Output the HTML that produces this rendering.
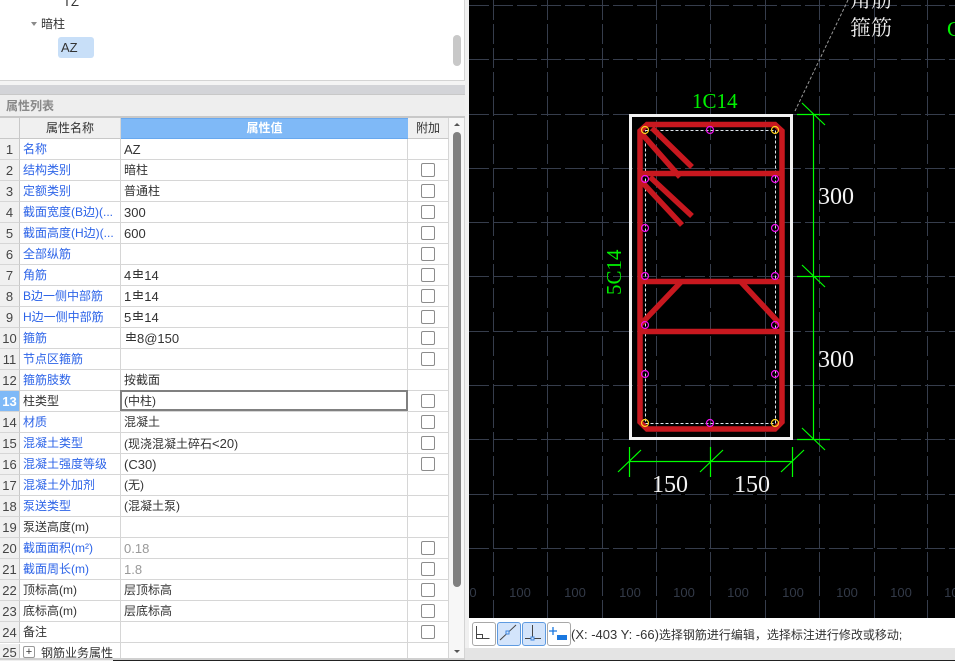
<!DOCTYPE html>
<html lang="zh"><head><meta charset="utf-8"><title>属性列表</title>
<style>
html,body{margin:0;padding:0}
body{width:955px;height:661px;position:relative;overflow:hidden;background:#efefef;font:12px/17px "Liberation Sans","Noto Sans CJK SC",sans-serif;color:#333}
.a{position:absolute}
s{text-decoration:none;font-size:13px}
table{position:absolute;left:0;top:118px;width:449px;border-collapse:separate;border-spacing:0;table-layout:fixed;background:#fff}
td{height:19px;padding:1px 0 0 3px;border-bottom:1px solid #d6d6d6;border-right:1px solid #d6d6d6;white-space:nowrap;overflow:hidden;box-sizing:content-box;line-height:17px;vertical-align:middle}
td.n{background:#f0f0f0;padding:1px 0 0 0;text-align:center;font-size:13px;color:#444;border-right:1px solid #c8c8c8}
td.b{color:#2d64e8}
td.c{padding:0;position:relative}
td.c i{position:absolute;left:13px;top:3px;width:12px;height:12px;border:1px solid #8c8c8c;border-radius:2px;background:#fff}
tr.h td{height:20px;background:#f0f0f0;text-align:center;padding:0;font-size:12px;border-bottom:1px solid #c8c8c8}
tr.h td.v{background:#7fb9f7;color:#fff;border:1px solid #68a8ee;border-width:1px 0 1px 0;height:19px;font-weight:bold}
svg.s{display:inline-block;width:10px;height:10px;vertical-align:1px;margin:0 1px 0 2px}
.bt{position:absolute;top:622px;width:22px;height:22px;border:1px solid #a8a8a8;border-radius:3px;background:#fff}
.bt.on{background:#d3e4fb;border-color:#5e9ae0}
</style></head><body>

<div class="a" style="left:0;top:0;width:465px;height:81px;background:#fff;border-bottom:1px solid #d4d4d4;box-sizing:border-box"></div>
<div class="a" style="left:63px;top:-7px"><s>TZ</s></div>
<div class="a" style="left:31px;top:22px;width:0;height:0;border:3.5px solid transparent;border-top:4px solid #8a8a8a;border-bottom:0"></div>
<div class="a" style="left:41px;top:16px">暗柱</div>
<div class="a" style="left:58px;top:37px;width:36px;height:21px;background:#c8dff8;border-radius:3px"></div>
<div class="a" style="left:61px;top:39px"><s>AZ</s></div>
<div class="a" style="left:453px;top:35px;width:8px;height:31px;background:#c8c8c8;border-radius:4px"></div>
<div class="a" style="left:464px;top:0;width:1px;height:81px;background:#d4d4d4"></div>

<div class="a" style="left:0;top:81px;width:465px;height:4px;background:#f4f4f4"></div>
<div class="a" style="left:0;top:85px;width:465px;height:9px;background:#d3d4d8"></div>
<div class="a" style="left:0;top:94px;width:465px;height:22px;background:#eeeeee;border-top:1px solid #c8c8c8;box-sizing:border-box"></div>
<div class="a" style="left:6px;top:98px;color:#888;font-weight:bold">属性列表</div>
<div class="a" style="left:0;top:116px;width:465px;height:2px;background:#c8c8c8"></div>

<table>
<colgroup><col style="width:20px"><col style="width:101px"><col style="width:287px"><col style="width:41px"></colgroup>
<tr class="h"><td class="n" style="font-size:12px"></td><td>属性名称</td><td class="v">属性值</td><td>附加</td></tr>
<tr><td class="n">1</td><td class="b">名称</td><td><s>AZ</s></td><td class="c"></td></tr>
<tr><td class="n">2</td><td class="b">结构类别</td><td>暗柱</td><td class="c"><i></i></td></tr>
<tr><td class="n">3</td><td class="b">定额类别</td><td>普通柱</td><td class="c"><i></i></td></tr>
<tr><td class="n">4</td><td class="b">截面宽度(B边)(...</td><td><s>300</s></td><td class="c"><i></i></td></tr>
<tr><td class="n">5</td><td class="b">截面高度(H边)(...</td><td><s>600</s></td><td class="c"><i></i></td></tr>
<tr><td class="n">6</td><td class="b">全部纵筋</td><td></td><td class="c"><i></i></td></tr>
<tr><td class="n">7</td><td class="b">角筋</td><td><s>4</s><svg class="s" viewBox="0 0 10 10"><path d="M5 0V8M1 2.500H9V5.500H1ZM0 8.500H10" fill="none" stroke="#333"/></svg><s>14</s></td><td class="c"><i></i></td></tr>
<tr><td class="n">8</td><td class="b">B边一侧中部筋</td><td><s>1</s><svg class="s" viewBox="0 0 10 10"><path d="M5 0V8M1 2.500H9V5.500H1ZM0 8.500H10" fill="none" stroke="#333"/></svg><s>14</s></td><td class="c"><i></i></td></tr>
<tr><td class="n">9</td><td class="b">H边一侧中部筋</td><td><s>5</s><svg class="s" viewBox="0 0 10 10"><path d="M5 0V8M1 2.500H9V5.500H1ZM0 8.500H10" fill="none" stroke="#333"/></svg><s>14</s></td><td class="c"><i></i></td></tr>
<tr><td class="n">10</td><td class="b">箍筋</td><td><svg class="s" viewBox="0 0 10 10"><path d="M5 0V8M1 2.500H9V5.500H1ZM0 8.500H10" fill="none" stroke="#333"/></svg><s>8@150</s></td><td class="c"><i></i></td></tr>
<tr><td class="n">11</td><td class="b">节点区箍筋</td><td></td><td class="c"><i></i></td></tr>
<tr><td class="n">12</td><td class="b">箍筋肢数</td><td>按截面</td><td class="c"></td></tr>
<tr><td class="n" style="background:#7fb9f7;color:#fff;font-weight:bold">13</td><td>柱类型</td><td>(中柱)</td><td class="c"><i></i></td></tr>
<tr><td class="n">14</td><td class="b">材质</td><td>混凝土</td><td class="c"><i></i></td></tr>
<tr><td class="n">15</td><td class="b">混凝土类型</td><td>(现浇混凝土碎石<s>&lt;20</s>)</td><td class="c"><i></i></td></tr>
<tr><td class="n">16</td><td class="b">混凝土强度等级</td><td><s>(C30)</s></td><td class="c"><i></i></td></tr>
<tr><td class="n">17</td><td class="b">混凝土外加剂</td><td>(无)</td><td class="c"></td></tr>
<tr><td class="n">18</td><td class="b">泵送类型</td><td>(混凝土泵)</td><td class="c"></td></tr>
<tr><td class="n">19</td><td>泵送高度(m)</td><td></td><td class="c"></td></tr>
<tr><td class="n">20</td><td class="b">截面面积(m²)</td><td style="color:#999"><s>0.18</s></td><td class="c"><i></i></td></tr>
<tr><td class="n">21</td><td class="b">截面周长(m)</td><td style="color:#999"><s>1.8</s></td><td class="c"><i></i></td></tr>
<tr><td class="n">22</td><td>顶标高(m)</td><td>层顶标高</td><td class="c"><i></i></td></tr>
<tr><td class="n">23</td><td>底标高(m)</td><td>层底标高</td><td class="c"><i></i></td></tr>
<tr><td class="n">24</td><td>备注</td><td></td><td class="c"><i></i></td></tr>
</table>

<div class="a" style="left:0;top:643px;width:449px;height:15px;background:#fff;overflow:hidden">
  <div class="a" style="left:0;top:1px;width:19px;height:15px;background:#f0f0f0;border-right:1px solid #c8c8c8;text-align:center;font-size:13px;color:#444">25</div>
  <div class="a" style="left:23px;top:3px;width:10px;height:10px;border:1px solid #999;border-radius:2px;text-align:center;line-height:10px;font-size:11px">+</div>
  <div class="a" style="left:41px;top:2px">钢筋业务属性</div>
  <div class="a" style="left:120px;top:0;width:1px;height:15px;background:#d6d6d6"></div>
  <div class="a" style="left:407px;top:0;width:1px;height:15px;background:#d6d6d6"></div>
  <div class="a" style="left:448px;top:0;width:1px;height:15px;background:#d6d6d6"></div>
</div>

<div class="a" style="left:120px;top:390px;width:288px;height:21px;border:2px solid #808080;box-sizing:border-box"></div>

<div class="a" style="left:449px;top:118px;width:15px;height:540px;background:#f7f7f7"></div>
<div class="a" style="left:453px;top:132px;width:8px;height:455px;background:#808080;border-radius:4px"></div>
<div class="a" style="left:454px;top:123px;width:0;height:0;border:3px solid transparent;border-bottom:3px solid #555;border-top:0"></div>
<div class="a" style="left:454px;top:650px;width:0;height:0;border:3px solid transparent;border-top:3px solid #555;border-bottom:0"></div>
<div class="a" style="left:464px;top:118px;width:1px;height:540px;background:#d4d4d4"></div>
<div class="a" style="left:0;top:658px;width:465px;height:2px;background:#d0d0d0"></div>
<div class="a" style="left:113px;top:660px;width:842px;height:1px;background:#222"></div>

<svg class="a" style="left:0;top:0" width="955" height="618" viewBox="0 0 955 618" font-family="'Liberation Serif','Noto Serif CJK SC',serif">
<rect x="469" y="0" width="486" height="618" fill="#000"/>
<g stroke="#363d4c" stroke-width="1" stroke-dasharray="20 4" fill="none">
<path d="M493.500 0V618M547.500 0V618M602.500 0V618M656.500 0V618M710.500 0V618M765.500 0V618M819.500 0V618M874.500 0V618M927.500 0V618"/>
<path d="M469 5.500H955M469 59.500H955M469 114.500H955M469 168.500H955M469 222.500H955M469 276.500H955M469 331.500H955M469 385.500H955M469 439.500H955M469 494.500H955M469 548.500H955"/>
</g>
<g fill="#333a48" font-family="'Liberation Sans',sans-serif" font-size="13" text-anchor="middle">
<text x="473" y="597">0</text><text x="520" y="597">100</text><text x="575" y="597">100</text><text x="630" y="597">100</text><text x="684" y="597">100</text><text x="738" y="597">100</text><text x="793" y="597">100</text><text x="847" y="597">100</text><text x="901" y="597">100</text><text x="955" y="597">100</text>
</g>
<path d="M795 111L848 0" stroke="#999" stroke-dasharray="3 2" fill="none"/>
<rect x="630.500" y="115.500" width="161" height="323" fill="none" stroke="#f2f2f2" stroke-width="3"/>
<rect x="645.500" y="130.500" width="130" height="293" fill="none" stroke="#dfe6ee" stroke-dasharray="3 2"/>
<g stroke="#c8181f" stroke-width="5.500" fill="none">
<path d="M647 124.500H775L782 131V422L775 429H647L640 422V131Z"/>
<path d="M640 173.500H782M640 281.500H782M640 331.500H782"/>
<path d="M642 134L680 177M652 128L692 167M642 182L682 225M650 177L692 216"/>
<path d="M640 325L681 282M781 325L741 282"/>
</g>
<g fill="none" stroke="#f010f0" stroke-width="1.200">
<circle cx="710" cy="130" r="3.500"/><circle cx="645" cy="179" r="3.500"/><circle cx="775" cy="179" r="3.500"/><circle cx="645" cy="228" r="3.500"/><circle cx="775" cy="228" r="3.500"/><circle cx="645" cy="276" r="3.500"/><circle cx="775" cy="276" r="3.500"/><circle cx="645" cy="325" r="3.500"/><circle cx="775" cy="325" r="3.500"/><circle cx="645" cy="374" r="3.500"/><circle cx="775" cy="374" r="3.500"/><circle cx="710" cy="423" r="3.500"/>
</g>
<g fill="none" stroke="#ffd020" stroke-width="1.200">
<circle cx="645" cy="130" r="3.500"/><circle cx="775" cy="130" r="3.500"/><circle cx="645" cy="423" r="3.500"/><circle cx="775" cy="423" r="3.500"/>
</g>
<g stroke="#00ff00" stroke-width="1.200" fill="none">
<path d="M813.500 114V439M797 114.500H830M797 276.500H830M797 439.500H830M802 103L825 125M802 265L825 287M802 428L825 450"/>
<path d="M629 461.500H793M629.500 447V477M710.500 447V477M792.500 447V477M618 472L641 450M700 472L723 450M781 472L804 450"/>
</g>
<g fill="#f4f4f4" font-size="24">
<text x="818" y="204">300</text><text x="818" y="367">300</text><text x="652" y="492">150</text><text x="734" y="492">150</text>
</g>
<g fill="#00f000" font-size="21">
<text x="692" y="108">1C14</text>
<text transform="translate(621,295) rotate(-90)">5C14</text>
<text x="947" y="36">C</text>
</g>
<g fill="#f0f0f0" font-size="21">
<text x="850" y="7">角筋</text><text x="850" y="35">箍筋</text>
</g>
</svg>

<div class="a" style="left:469px;top:618px;width:486px;height:30px;background:#fff"></div>
<div class="a" style="left:465px;top:648px;width:490px;height:12px;background:#e4e4e4"></div>
<div class="a" style="left:465px;top:0;width:4px;height:648px;background:#f0f0f0"></div>

<div class="bt" style="left:472px"><svg width="22" height="22" style="display:block"><path d="M3.500 3V15.500H16.500M3.500 11.500H9.500V15.500" fill="none" stroke="#444"/></svg></div>
<div class="bt on" style="left:497px"><svg width="22" height="22" style="display:block"><path d="M2 17L18 2" stroke="#444"/><rect x="8" y="8" width="3" height="3" fill="#d3e4fb" stroke="#3d85dc"/></svg></div>
<div class="bt on" style="left:522px"><svg width="22" height="22" style="display:block"><path d="M2 15.500H18M9.500 2V15.500" fill="none" stroke="#444"/><rect x="8" y="14" width="3" height="3" fill="#d3e4fb" stroke="#3d85dc"/></svg></div>
<div class="bt" style="left:547px"><svg width="22" height="22" style="display:block"><path d="M1 8H9M5 4V12" stroke="#1a78e0" stroke-width="1.300" fill="none"/><rect x="9" y="12" width="10" height="5" fill="#1a78e0"/></svg></div>
<div class="a" style="left:571px;top:626px;white-space:nowrap;color:#333"><s>(X: -403 Y: -66)</s>选择钢筋进行编辑，选择标注进行修改或移动;</div>

</body></html>
